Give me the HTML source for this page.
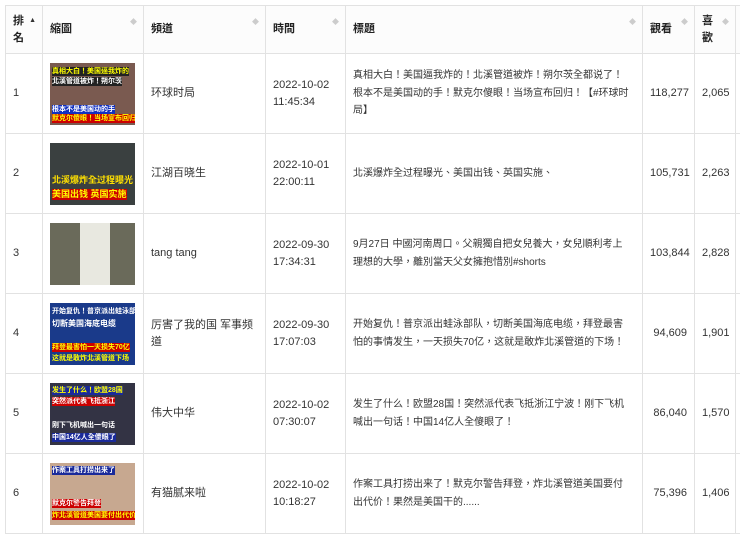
<!DOCTYPE html>
<html><head><meta charset="utf-8"><style>
body{margin:0;background:#fff;font-family:"Liberation Sans","Noto Sans CJK TC",sans-serif;font-size:11px;color:#333;}
table{position:absolute;left:5px;top:5px;border-collapse:collapse;table-layout:fixed;width:740px;}
td,th{border:1px solid #e2e2e2;padding:0 7px;vertical-align:middle;text-align:left;line-height:17px;}
th{height:47px;font-weight:bold;background:#fcfcfc;position:relative;color:#222;}
th .s{position:absolute;right:6px;top:8px;color:#ccc;font-size:7px;}
tr.r td{height:79px;}
td.t{font-size:10px;line-height:17.5px;padding-right:13px;}
.n{text-align:right;}
.th{width:85px;height:62px;position:relative;overflow:hidden;background:#444;}
.th div{position:absolute;left:2px;font-size:7px;line-height:9px;font-weight:bold;white-space:nowrap;}
</style></head><body>
<table>
<colgroup><col style="width:37px"><col style="width:101px"><col style="width:122px"><col style="width:80px"><col style="width:297px"><col style="width:52px"><col style="width:41px"><col style="width:10px"></colgroup>
<tr><th>排<br>名<span class="s" style="color:#333;top:6px">▲</span></th><th>縮圖<span class="s">◆</span></th><th>頻道<span class="s">◆</span></th><th>時間<span class="s">◆</span></th><th>標題<span class="s">◆</span></th><th>觀看<span class="s">◆</span></th><th>喜<br>歡<span class="s">◆</span></th><th></th></tr>
<tr class="r"><td>1</td><td><div class="th" style="background:#7a5a50"><div style="top:4px;background:#222;color:#ff0">真相大白！美国逼我炸的</div><div style="top:14px;background:#222;color:#fff">北溪管道被炸！朔尔茨</div><div style="top:42px;background:#1230c0;color:#fff">根本不是美国动的手</div><div style="top:51px;background:#c00;color:#ff0">默克尔傻眼！当场宣布回归</div></div></td><td>环球时局</td><td>2022-10-02<br>11:45:34</td><td class="t">真相大白！美国逼我炸的！北溪管道被炸！朔尔茨全都说了！根本不是美国动的手！默克尔傻眼！当场宣布回归！【#环球时局】</td><td class="n">118,277</td><td class="n">2,065</td><td></td></tr>
<tr class="r"><td>2</td><td><div class="th" style="background:#3a4040"><div style="top:32px;color:#ffe000;font-size:9px;line-height:11px">北溪爆炸全过程曝光</div><div style="top:46px;background:#c00;color:#ff0;font-size:9px;line-height:11px">美国出钱 英国实施</div></div></td><td>江湖百晓生</td><td>2022-10-01<br>22:00:11</td><td class="t">北溪爆炸全过程曝光、美国出钱、英国实施、</td><td class="n">105,731</td><td class="n">2,263</td><td></td></tr>
<tr class="r"><td>3</td><td><div class="th" style="background:#6a6a5a"><div style="top:0;left:30px;width:30px;height:62px;background:#e8e8e0"></div></div></td><td>tang tang</td><td>2022-09-30<br>17:34:31</td><td class="t">9月27日 中國河南周口。父親獨自把女兒養大，女兒順利考上理想的大學，離別當天父女擁抱惜別#shorts</td><td class="n">103,844</td><td class="n">2,828</td><td></td></tr>
<tr class="r"><td>4</td><td><div class="th" style="background:#1a3a8a"><div style="top:4px;color:#fff">开始复仇！普京派出蛙泳部队</div><div style="top:16px;color:#fff;font-size:8px">切断美国海底电缆</div><div style="top:40px;background:#c00;color:#ff0">拜登最害怕一天损失70亿</div><div style="top:51px;color:#ff0">这就是敢炸北溪管道下场</div></div></td><td>厉害了我的国 军事频道</td><td>2022-09-30<br>17:07:03</td><td class="t">开始复仇！普京派出蛙泳部队，切断美国海底电缆，拜登最害怕的事情发生，一天损失70亿，这就是敢炸北溪管道的下场！</td><td class="n">94,609</td><td class="n">1,901</td><td></td></tr>
<tr class="r"><td>5</td><td><div class="th" style="background:#334"><div style="top:3px;background:#1a2a9a;color:#ff0">发生了什么！欧盟28国</div><div style="top:14px;background:#c00;color:#fff">突然派代表飞抵浙江</div><div style="top:38px;color:#fff">刚下飞机喊出一句话</div><div style="top:50px;background:#1a2a9a;color:#fff">中国14亿人全傻眼了</div></div></td><td>伟大中华</td><td>2022-10-02<br>07:30:07</td><td class="t">发生了什么！欧盟28国！突然派代表飞抵浙江宁波！刚下飞机喊出一句话！中国14亿人全傻眼了！</td><td class="n">86,040</td><td class="n">1,570</td><td></td></tr>
<tr class="r"><td>6</td><td><div class="th" style="background:#c7a890"><div style="top:3px;background:#1a2a9a;color:#fff">作案工具打捞出来了</div><div style="top:36px;background:#c00;color:#fff">默克尔警告拜登</div><div style="top:48px;background:#c00;color:#ff0">炸北溪管道美国要付出代价</div></div></td><td>有猫腻来啦</td><td>2022-10-02<br>10:18:27</td><td class="t">作案工具打捞出来了！默克尔警告拜登，炸北溪管道美国要付出代价！果然是美国干的......</td><td class="n">75,396</td><td class="n">1,406</td><td></td></tr>
</table>
</body></html>
